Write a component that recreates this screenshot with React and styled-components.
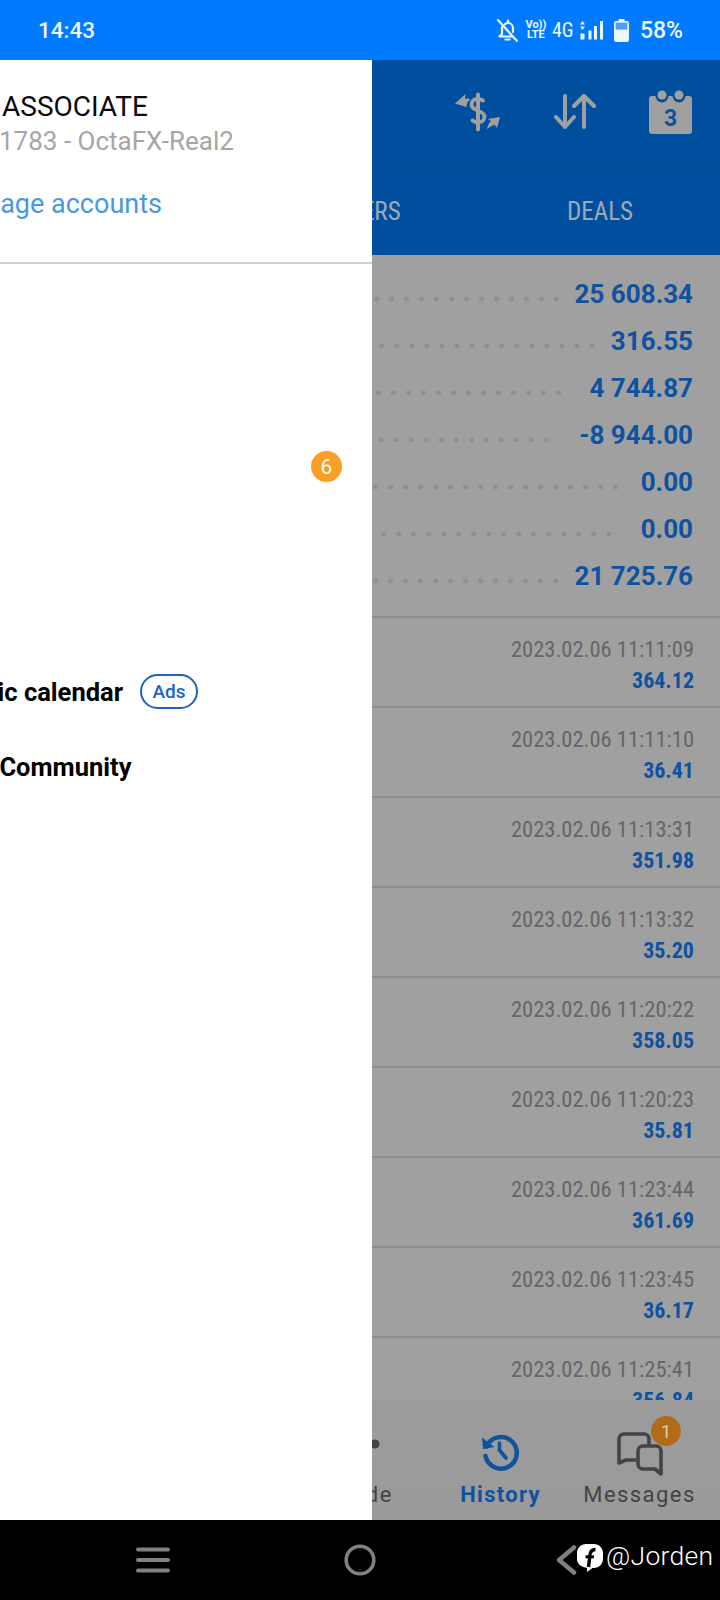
import React from "react";
import styled, { createGlobalStyle } from "styled-components";

const Global = createGlobalStyle`
  html, body { margin: 0; padding: 0; background: #000; }
  #root { width: 720px; height: 1600px; }
  * { box-sizing: border-box; }
`;

const Phone = styled.div`
  position: relative;
  width: 720px;
  height: 1600px;
  overflow: hidden;
  display: flex;
  flex-direction: column;
  font-family: Roboto, "Noto Sans", sans-serif;
  background: #a0a0a0;
`;

const StatusBar = styled.header`
  height: 60px;
  flex: none;
  background: #007aff;
  display: flex;
  align-items: center;
  padding: 0 37px 0 38px;
  color: #eef6ff;
  position: relative;
  z-index: 3;
`;
const Clock = styled.span`
  font-size: 22.5px;
  font-weight: 500;
  margin-right: auto;
`;
const StatusIcons = styled.div`
  display: flex;
  align-items: center;
`;
const FourG = styled.span`
  width: 20px;
  font-size: 20px;
  font-stretch: 75%;
  font-weight: 400;
  margin: 0 8.5px 0 7px;
`;
const VoLte = styled.span`
  width: 18px;
  display: flex;
  flex-direction: column;
  align-items: center;
  margin-left: 9px;
  font-size: 11px;
  line-height: 10px;
  font-weight: 700;
`;
const Percent = styled.span`
  font-size: 23px;
  font-weight: 500;
  margin-left: 10.5px;
`;
const BatterySlot = styled.span`
  display: flex;
  margin-left: 11px;
`;

const AppBar = styled.div`
  flex: none;
  height: 195px;
  background: #004f9f;
  display: flex;
  flex-direction: column;
`;
const Toolbar = styled.div`
  height: 105px;
  display: flex;
  justify-content: flex-end;
  align-items: center;
  padding: 0 27px 1px 0;
  border-bottom: 1px solid #004a95;
  gap: 53px;
`;
const Tabs = styled.div`
  flex: 1;
  display: grid;
  grid-template-columns: repeat(3, 1fr);
  align-items: center;
  text-align: center;
`;
const Tab = styled.span`
  font-size: 25px;
  font-stretch: 75%;
  color: #9ea9b8;
  padding-top: 2px;
`;

const Summary = styled.section`
  flex: none;
  height: 363px;
  padding: 15px 27px 0 0;
  border-bottom: 2px solid #8d8d8d;
`;
const SummaryRow = styled.div`
  height: 47px;
  display: flex;
  align-items: center;
`;
const Dots = styled.span`
  flex: 1;
  height: 6px;
  margin-top: 11px;
  margin-right: ${(p) => p.$gap}px;
  background-image: radial-gradient(circle at center, #8f8f8f 2.2px, transparent 2.8px);
  background-size: 15px 6px;
  background-position: right center;
  background-repeat: repeat-x;
`;
const Amount = styled.span`
  font-size: 26px;
  font-weight: 700;
  color: #0f52a0;
`;

const HistoryList = styled.section`
  flex: 1;
  overflow: hidden;
  min-height: 0;
`;
const Deal = styled.div`
  height: 90px;
  padding: 16px 26px 0 0;
  border-bottom: 2px solid #8d8d8d;
  display: flex;
  flex-direction: column;
  align-items: flex-end;
`;
const DealDate = styled.span`
  font-size: 22.5px;
  line-height: 30px;
  font-stretch: 75%;
  color: #666;
`;
const DealValue = styled.span`
  margin-top: 2px;
  font-size: 22px;
  line-height: 30px;
  font-weight: 700;
  font-stretch: 75%;
  color: #0f52a0;
`;

const BottomNav = styled.nav`
  flex: none;
  height: 120px;
  background: linear-gradient(#9c9c9c, #9a9a9a);
  display: flex;
  justify-content: flex-end;
  padding-right: 11px;
`;
const NavItem = styled.div`
  position: relative;
  width: 139px;
  display: flex;
  flex-direction: column;
  align-items: center;
  padding-top: 32px;
  color: ${(p) => (p.$active ? "#0f52a0" : "#444")};
`;
const NavIcon = styled.div`
  height: 44px;
  display: flex;
  align-items: flex-start;
`;
const NavLabel = styled.span`
  margin-top: 5px;
  font-size: 22px;
  line-height: 28px;
  font-weight: ${(p) => (p.$active ? 700 : 400)};
  letter-spacing: ${(p) => (p.$active ? "1.3px" : "1.45px")};
`;
const NavBadge = styled.span`
  position: absolute;
  top: 16px;
  left: 81px;
  width: 30px;
  height: 30px;
  border-radius: 50%;
  background: #b06c18;
  color: #e6c89c;
  font-size: 19px;
  display: flex;
  align-items: center;
  justify-content: center;
`;

const SystemNav = styled.footer`
  position: relative;
  flex: none;
  height: 80px;
  background: #000;
  display: grid;
  grid-template-columns: 306px 108px 1fr;
  align-items: center;
  justify-items: center;
`;
const Watermark = styled.div`
  position: absolute;
  left: 556px;
  top: 23px;
  height: 30px;
  display: flex;
  align-items: center;
  color: #fff;
  font-size: 26.5px;
  font-weight: 300;
  letter-spacing: 0.3px;
`;
const Handle = styled.span`
  margin: 0 0 5px 3px;
`;
const ChevronWrap = styled.span`
  display: flex;
  margin-top: 4px;
`;

const Drawer = styled.aside`
  position: absolute;
  left: -159px;
  top: 60px;
  width: 531px;
  height: 1460px;
  background: #fff;
  z-index: 2;
`;
const DrawerHeader = styled.div`
  height: 204px;
  border-bottom: 2px solid #cfcfcf;
  padding-top: 30px;
`;
const AccountName = styled.div`
  margin-left: 161px;
  font-size: 28px;
  line-height: 34px;
  color: #0a0a0a;
`;
const AccountLine = styled.div`
  margin-left: 158px;
  margin-top: -1px;
  font-size: 26px;
  line-height: 36px;
  color: #a6a6a6;
`;
const ManageLink = styled.div`
  margin-left: 106px;
  margin-top: 27px;
  font-size: 27px;
  line-height: 36px;
  color: #4a98e0;
`;
const MenuList = styled.div`
  padding-top: 15px;
`;
const MenuRow = styled.div`
  height: 75px;
  display: flex;
  align-items: center;
  padding: 0 30px 0 64px;
`;
const MenuLabel = styled.span`
  font-size: 25.5px;
  font-weight: 700;
  color: #000;
  white-space: nowrap;
`;
const AdsPill = styled.span`
  margin-left: 17px;
  width: 58px;
  height: 35px;
  border: 2px solid #1c64c0;
  border-radius: 18px;
  color: #1a63cc;
  font-size: 19px;
  font-weight: 500;
  display: flex;
  align-items: center;
  justify-content: center;
`;
const CountBadge = styled.span`
  margin-left: auto;
  width: 31px;
  height: 31px;
  border-radius: 50%;
  background: #fa9e25;
  color: #fff;
  font-size: 21px;
  display: flex;
  align-items: center;
  justify-content: center;
`;

const summary = [
  ["25 608.34", 10.5],
  ["316.55", 11.5],
  ["4 744.87", 23.5],
  ["-8 944.00", 25.5],
  ["0.00", 17.5],
  ["0.00", 24.5],
  ["21 725.76", 11.5],
];
const deals = [
  ["2023.02.06 11:11:09", "364.12"],
  ["2023.02.06 11:11:10", "36.41"],
  ["2023.02.06 11:13:31", "351.98"],
  ["2023.02.06 11:13:32", "35.20"],
  ["2023.02.06 11:20:22", "358.05"],
  ["2023.02.06 11:20:23", "35.81"],
  ["2023.02.06 11:23:44", "361.69"],
  ["2023.02.06 11:23:45", "36.17"],
  ["2023.02.06 11:25:41", "356.84"],
];

const BellOff = () => (
  <svg width="21" height="23" viewBox="0 0 21 23" fill="none" stroke="#eef6ff" strokeWidth="2.2" strokeLinecap="round" strokeLinejoin="round">
    <path d="M1 1l19 21" />
    <path d="M5 8v7l-2.500 2.500H15M16 13V9.500c0-3-2-5.500-4.800-5.500-1.300 0-2.400.4-3.300 1.200" />
    <path d="M11 1.500v2" />
    <path d="M8.500 20.500h4" />
  </svg>
);
const Signal = () => (
  <svg width="23" height="19" viewBox="0 0 23 19" fill="#eef6ff">
    <path d="M2.500 0l2.500 3.500H0zM2.500 9L0 5.500h5z" />
    <rect x="0.500" y="12.500" width="4" height="6" />
    <rect x="8.500" y="9.500" width="3" height="9" />
    <rect x="14" y="5" width="3" height="13.500" />
    <rect x="20" y="0" width="3" height="18.500" />
  </svg>
);
const Battery = () => (
  <svg width="15" height="23" viewBox="0 0 15 23">
    <path d="M4.500 0h6v2h2.500a2 2 0 0 1 2 2v17a2 2 0 0 1-2 2H2a2 2 0 0 1-2-2V4a2 2 0 0 1 2-2h2.500z" fill="#eef6ff" />
    <rect x="1.600" y="3.600" width="11.800" height="7" fill="#4d9fff" />
  </svg>
);
const DollarSwap = () => (
  <svg width="46" height="40" viewBox="0 0 46 40" fill="none" stroke="#a0a0a0" strokeLinecap="round">
    <path d="M23 2.500v35" strokeWidth="4" />
    <path d="M28 8.500c-2-1.200-3.500-1.500-5.500-1.500-3.500 0-6 2.300-6 5.300 0 3.500 3 5 6 6" strokeWidth="3.800" />
    <path d="M23.500 19c3 1 6 2.500 6 6 0 3.300-3 5.300-6.500 5.300-2 0-4-.6-5.500-1.800" strokeWidth="3.800" />
    <path d="M0 11.500L10.500 2 10 7c2-.8 4-.5 5.500.5-2.500 1.500-4 4-4 7.500z" fill="#a0a0a0" stroke="none" />
    <path d="M32 37c.8-3.500 2-6 4-8l-3-2 12-2-3 11-2.500-3.500c-2.500 1-5 2.500-7.500 4.500z" fill="#a0a0a0" stroke="none" />
  </svg>
);
const UpDown = () => (
  <svg width="42" height="36" viewBox="0 0 42 36" fill="none" stroke="#a0a0a0" strokeWidth="4" strokeLinecap="round" strokeLinejoin="round">
    <path d="M11 2v31M2 23l9 10 9-10" />
    <path d="M30 33V2M20 12L30 2l10 10" />
  </svg>
);
const CalendarDay = () => (
  <svg width="44" height="45" viewBox="0 0 44 45">
    <rect x="0" y="7" width="43" height="38" rx="3" fill="#a0a0a0" />
    <circle cx="13" cy="7" r="6.500" fill="#004f9f" />
    <circle cx="30" cy="7" r="6.500" fill="#004f9f" />
    <circle cx="13" cy="6" r="4.500" fill="#a0a0a0" />
    <circle cx="30" cy="6" r="4.500" fill="#a0a0a0" />
    <text x="21.500" y="37" textAnchor="middle" fontFamily="Roboto" fontWeight="700" fontSize="23" fill="#0f52a0">3</text>
  </svg>
);
const TradeGlyph = () => (
  <svg width="40" height="40" viewBox="0 0 40 40" fill="#444">
    <circle cx="33" cy="12" r="4.500" />
  </svg>
);
const HistoryGlyph = () => (
  <svg width="40" height="40" viewBox="0 0 40 40" fill="none" stroke="#0f52a0" strokeWidth="4.500" strokeLinecap="round">
    <path d="M5.500 14.500A15.800 15.800 0 1 1 4.500 24" />
    <path d="M1 5.500l1 11.500 11.500-2z" fill="#0f52a0" stroke="none" />
    <path d="M18.500 11V18l6.500 8" strokeWidth="3.600" />
  </svg>
);
const ChatsGlyph = () => (
  <svg width="46" height="44" viewBox="0 0 46 44" fill="none" stroke="#444" strokeWidth="3.600" strokeLinecap="round" strokeLinejoin="round">
    <path d="M18 28H9l-7 3V7a5 5 0 0 1 5-5h20a5 5 0 0 1 5 5v6" />
    <path d="M26 14h13a5 5 0 0 1 5 5v23l-6-5H26a5 5 0 0 1-5-5V19a5 5 0 0 1 5-5z" />
  </svg>
);
const Burger = () => (
  <svg width="34" height="26" viewBox="0 0 34 26" fill="none" stroke="#808080" strokeWidth="4" strokeLinecap="round">
    <path d="M2 2.500h30M2 13h30M2 23.500h30" />
  </svg>
);
const HomeRing = () => (
  <svg width="32" height="32" viewBox="0 0 32 32" fill="none" stroke="#808080" strokeWidth="3.600">
    <circle cx="16" cy="16" r="13.800" />
  </svg>
);
const BackChevron = () => (
  <svg width="21" height="30" viewBox="0 0 21 30" fill="none" stroke="#808080" strokeWidth="4.500" strokeLinecap="round" strokeLinejoin="round">
    <path d="M18 2.500L3 15l15 12.500" />
  </svg>
);
const FbBubble = () => (
  <svg width="26" height="28" viewBox="0 0 26 28">
    <path d="M9 0h8c5 0 9 4 9 9v6c0 5-4 9-9 9h-1.500L10 28v-4.200C4 23 0 20 0 15V9c0-5 4-9 9-9z" fill="#fff" />
    <path d="M11.500 23L13 10.500c.5-3.500 2.500-5 5.500-5" fill="none" stroke="#000" strokeWidth="3.400" />
    <path d="M8.500 12.800h8.500" fill="none" stroke="#000" strokeWidth="3" />
  </svg>
);

export default function App() {
  return (
    <Phone>
      <Global />
      <StatusBar>
        <Clock>14:43</Clock>
        <StatusIcons>
          <BellOff />
          <VoLte>
            <span>Vo))</span>
            <span>LTE</span>
          </VoLte>
          <FourG>4G</FourG>
          <Signal />
          <BatterySlot>
            <Battery />
          </BatterySlot>
          <Percent>58%</Percent>
        </StatusIcons>
      </StatusBar>
      <AppBar>
        <Toolbar>
          <DollarSwap />
          <UpDown />
          <CalendarDay />
        </Toolbar>
        <Tabs>
          <Tab />
          <Tab>ORDERS</Tab>
          <Tab>DEALS</Tab>
        </Tabs>
      </AppBar>
      <Summary>
        {summary.map(([v, g], i) => (
          <SummaryRow key={i}>
            <Dots $gap={g} />
            <Amount>{v}</Amount>
          </SummaryRow>
        ))}
      </Summary>
      <HistoryList>
        {deals.map(([d, v]) => (
          <Deal key={d}>
            <DealDate>{d}</DealDate>
            <DealValue>{v}</DealValue>
          </Deal>
        ))}
      </HistoryList>
      <BottomNav>
        <NavItem>
          <NavIcon>
            <TradeGlyph />
          </NavIcon>
          <NavLabel>Trade</NavLabel>
        </NavItem>
        <NavItem $active>
          <NavIcon>
            <HistoryGlyph />
          </NavIcon>
          <NavLabel $active>History</NavLabel>
        </NavItem>
        <NavItem>
          <NavIcon>
            <ChatsGlyph />
          </NavIcon>
          <NavLabel>Messages</NavLabel>
          <NavBadge>1</NavBadge>
        </NavItem>
      </BottomNav>
      <SystemNav>
        <Burger />
        <HomeRing />
        <span />
        <Watermark>
          <ChevronWrap>
            <BackChevron />
          </ChevronWrap>
          <FbBubble />
          <Handle>@Jorden</Handle>
        </Watermark>
      </SystemNav>
      <Drawer>
        <DrawerHeader>
          <AccountName>ASSOCIATE</AccountName>
          <AccountLine>1783 - OctaFX-Real2</AccountLine>
          <ManageLink>Manage accounts</ManageLink>
        </DrawerHeader>
        <MenuList>
          <MenuRow />
          <MenuRow />
          <MenuRow>
            <CountBadge>6</CountBadge>
          </MenuRow>
          <MenuRow />
          <MenuRow />
          <MenuRow>
            <MenuLabel>Economic calendar</MenuLabel>
            <AdsPill>Ads</AdsPill>
          </MenuRow>
          <MenuRow>
            <MenuLabel>Traders Community</MenuLabel>
          </MenuRow>
        </MenuList>
      </Drawer>
    </Phone>
  );
}
